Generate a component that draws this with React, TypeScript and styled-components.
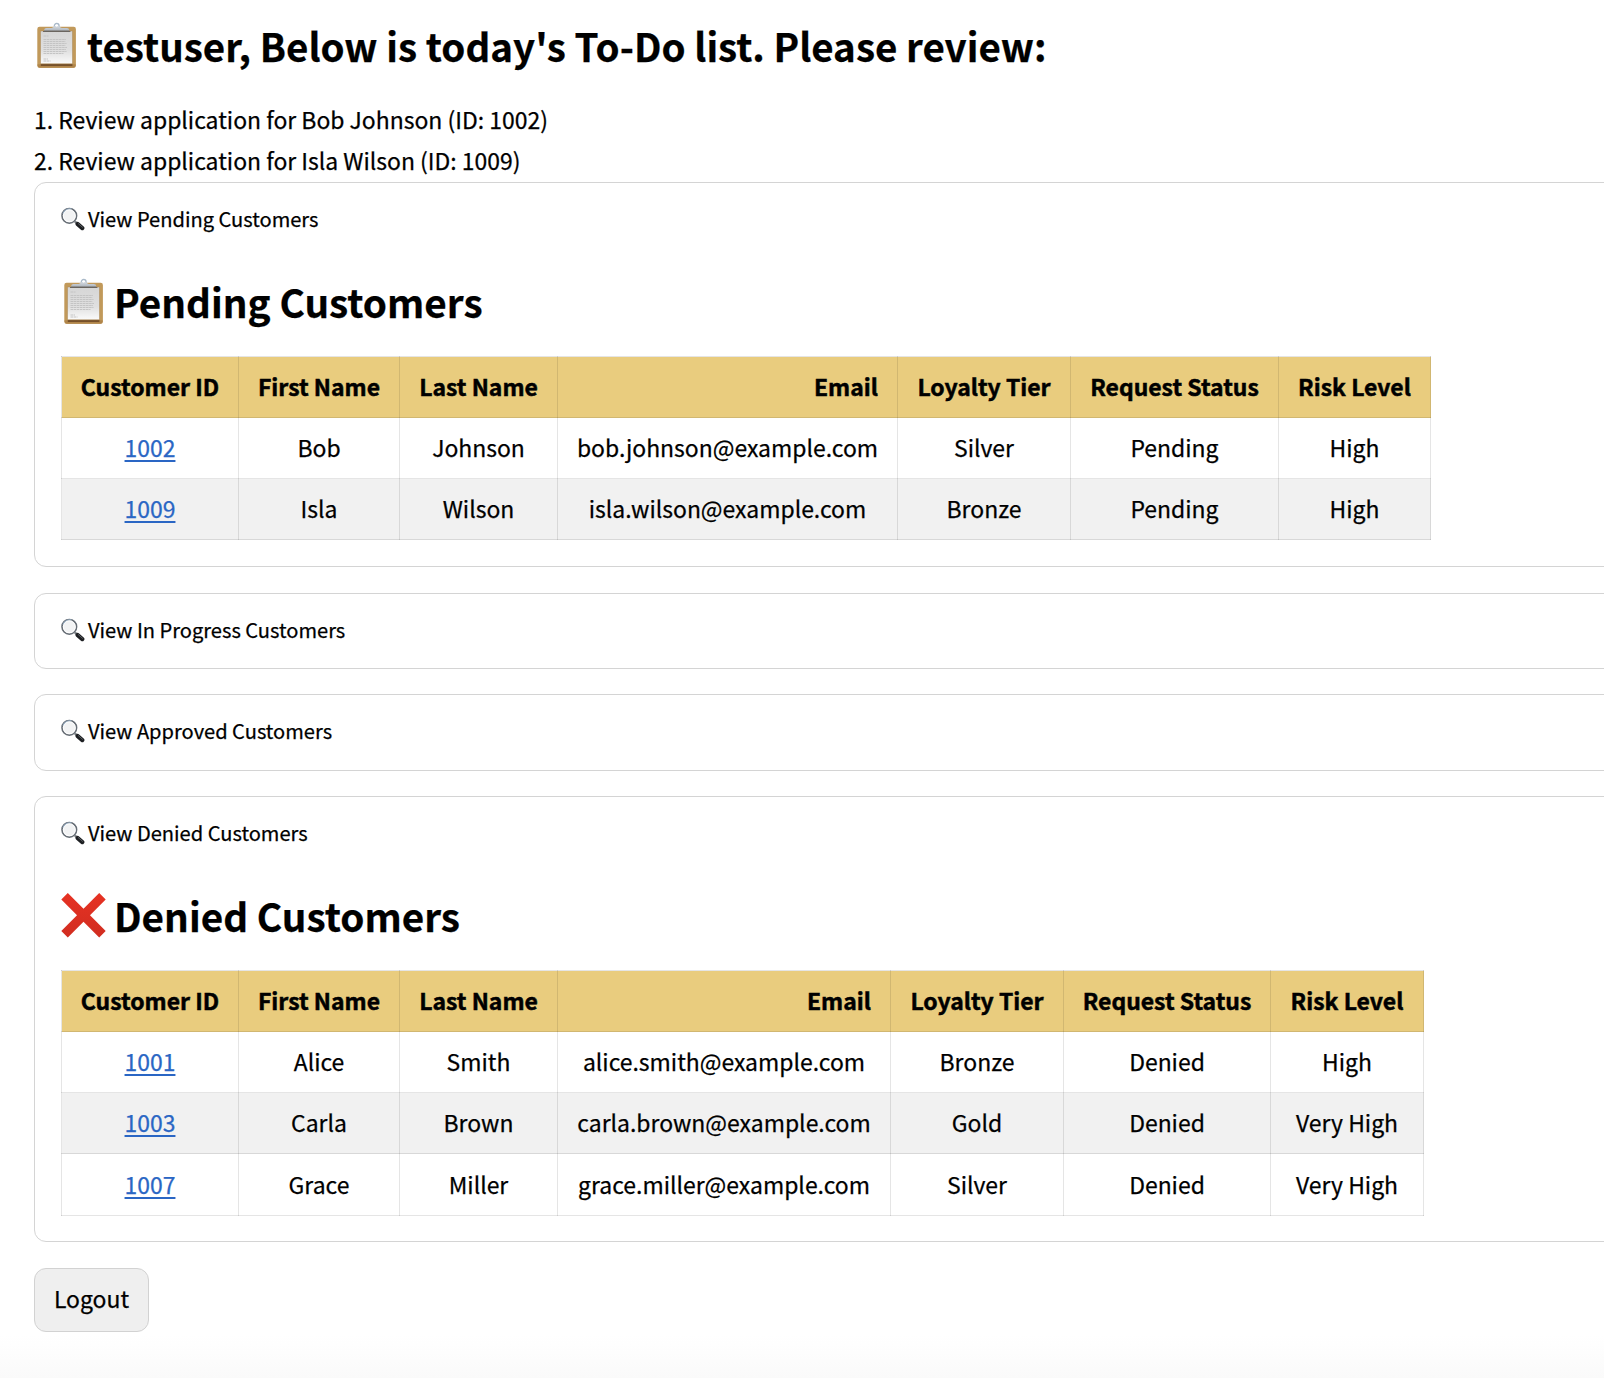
import React from "react";
import styled, { createGlobalStyle } from "styled-components";

const GlobalStyle = createGlobalStyle`
  *, *::before, *::after { box-sizing: border-box; }
  html, body { margin: 0; background: #fff; }
  body {
    overflow: hidden;
    color: #000;
    font-family: "Noto Sans CJK SC", "Noto Sans", sans-serif;
    font-size: 22.94px;
    line-height: 41px;
    -webkit-text-stroke: 0.25px currentColor;
  }
`;

const Page = styled.main`
  height: 1378px;
  padding: 22px 0 0 34px;
  overflow: hidden;
  background: linear-gradient(#fff 0, #fff 1335px, #fafafa 1378px);
`;

const Heading = styled.h2<{ $size?: number }>`
  display: flex;
  align-items: flex-start;
  gap: 8px;
  margin: 0;
  font-size: ${p => p.$size ?? 38.52}px;
  font-weight: 700;
  line-height: 46px;
  white-space: nowrap;
`;

const HeadingIcon = styled.svg`
  flex: none;
  width: 45px;
  height: 46px;
`;

const TodoList = styled.ol`
  margin: 31px 0 1px;
  padding: 0;
  list-style: none;
`;

const TodoItem = styled.li`
  height: 41px;
`;

const Panels = styled.div`
  display: flex;
  flex-direction: column;
  gap: 25.5px;
  width: 1620px;
`;

const Panel = styled.section<{ $open?: boolean }>`
  height: ${p => (p.$open ? "auto" : "76.25px")};
  padding: 24px 26px ${p => (p.$open ? "26px" : "0")};
  border: 1px solid #d4d4d4;
  border-radius: 12px;

  &:last-child { padding-bottom: 25px; }
`;

const Summary = styled.div`
  display: flex;
  gap: 3px;
  font-size: 20.08px;
  line-height: 24px;
`;

const SummaryIcon = styled.svg`
  flex: none;
  width: 24px;
  height: 24px;
`;

const PanelBody = styled.div`
  padding-top: 47px;
`;

const Table = styled.table<{ $w: number }>`
  width: ${p => p.$w}px;
  margin-top: 32px;
  border-collapse: collapse;
  table-layout: fixed;
`;

const Col = styled.col<{ $w: number }>`
  width: ${p => p.$w}px;
`;

const Row = styled.tr`
  height: 61px;

  tbody &:nth-child(2) { background: #f1f1f1; }
  tbody &:nth-child(3) { height: 62px; }
`;

const HeadCell = styled.th<{ $right?: boolean }>`
  padding: 0 ${p => (p.$right ? 19 : 0)}px 2px;
  border: 1px solid rgba(0, 0, 0, 0.1);
  background: #e9cc7e;
  font-weight: 700;
  line-height: 36px;
  text-align: ${p => (p.$right ? "right" : "center")};
  white-space: nowrap;
  -webkit-text-stroke: 0.5px currentColor;
`;

const Cell = styled.td`
  padding: 0 0 2px;
  border: 1px solid rgba(0, 0, 0, 0.1);
  line-height: 36px;
  text-align: center;
`;

const IdLink = styled.a`
  color: #2a66c4;
  text-decoration: underline;
  text-decoration-thickness: 2px;
  text-underline-offset: 3px;
`;

const LogoutButton = styled.button`
  display: block;
  width: 115px;
  height: 64px;
  margin-top: 26px;
  padding: 0 0 3px;
  border: 1px solid #d2d2d2;
  border-radius: 12px;
  background: #efefef;
  color: #000;
  font: inherit;
`;

function Clipboard() {
  return (
    <HeadingIcon viewBox="0 0 45 46">
      <defs>
        <linearGradient id="paper" x1="0" y1="0" x2="0" y2="1">
          <stop offset="0" stopColor="#d6d6d6" />
          <stop offset="0.6" stopColor="#e0e0e0" />
          <stop offset="1" stopColor="#fbfbfb" />
        </linearGradient>
        <linearGradient id="metal" x1="0" y1="0" x2="0" y2="1">
          <stop offset="0" stopColor="#d5dbe2" />
          <stop offset="0.7" stopColor="#b5bcc4" />
          <stop offset="1" stopColor="#6c6660" />
        </linearGradient>
      </defs>
      <rect x="3.3" y="4.8" width="38.6" height="41" rx="2.2" fill="#c1995a" />
      <path d="M3.6 42.2h38v1.3a2.2 2.2 0 0 1-2.2 2.2H5.8a2.2 2.2 0 0 1-2.2-2.2z" fill="#b0854a" />
      <path d="M6.8 41.5h31.6v2.4H6.8z" fill="#76502a" />
      <path d="M6.5 9h32v32.8h-32z" fill="url(#paper)" stroke="#a98755" strokeWidth="0.5" />
      <path d="M9.5 14h5M9.5 17.5h22.5M9.5 19.5h22M9.5 21.5h23M9.5 23.5h22M9.5 25.5h23.5M9.5 27.5h22.5M9.5 29.5h23M9.5 31.5h20M9.5 37h4.5M9.5 39h7" stroke="#c4c4c4" strokeWidth="1" strokeDasharray="2.6 0.5" fill="none" />
      <circle cx="22.7" cy="3.9" r="2.4" fill="#fff" stroke="#a9b9c9" strokeWidth="1.3" />
      <path d="M10 9.300c0-2.300.8-3.400 2.600-3.400h4.900c1.900 0 2.500-1.900 3.700-1.900h3c1.200 0 1.800 1.900 3.700 1.900h4.900c1.800 0 2.600 1.100 2.600 3.400z" fill="url(#metal)" />
      <circle cx="22.7" cy="3.6" r="1.1" fill="#fff" />
      <path d="M9 9.500h27.400" stroke="#625c58" strokeWidth="0.9" />
    </HeadingIcon>
  );
}

function Cross() {
  return (
    <HeadingIcon viewBox="0 0 45 46">
      <defs>
        <linearGradient id="red" x1="0" y1="0" x2="0" y2="1">
          <stop offset="0" stopColor="#e63223" />
          <stop offset="1" stopColor="#d12d20" />
        </linearGradient>
      </defs>
      <path d="M6.800 1 22.500 16.700 38.200 1l6.500 6.500L29 23.200l15.700 15.700-6.500 6.500-15.700-15.700L6.800 45.400.300 38.900 16 23.200.300 7.500z" fill="url(#red)" />
    </HeadingIcon>
  );
}

function Magnifier() {
  return (
    <SummaryIcon viewBox="0 0 24 24">
      <path d="m14 14.600 2.800 2.800" stroke="#6f7479" strokeWidth="2.200" />
      <path d="m16.700 17.100 4.600 4" stroke="#1d1f22" strokeWidth="4.200" strokeLinecap="round" />
      <path d="m17.300 16.600 4.200 3.700" stroke="#5f6469" strokeWidth="0.900" strokeLinecap="round" />
      <circle cx="8.300" cy="8.800" r="7.300" fill="#f2f3f4" stroke="#666d75" strokeWidth="1.600" />
      <path d="M2 6.700a7.300 7.300 0 0 1 8.400-4.800" fill="none" stroke="#93a9bf" strokeWidth="1.200" />
      <circle cx="8.300" cy="8.800" r="6" fill="none" stroke="#fff" strokeWidth="0.900" />
    </SummaryIcon>
  );
}

const columns = ["Customer ID", "First Name", "Last Name", "Email", "Loyalty Tier", "Request Status", "Risk Level"];

const pending = {
  widths: [177, 161, 158, 340, 173, 208, 152],
  rows: [
    ["1002", "Bob", "Johnson", "bob.johnson@example.com", "Silver", "Pending", "High"],
    ["1009", "Isla", "Wilson", "isla.wilson@example.com", "Bronze", "Pending", "High"],
  ],
};

const denied = {
  widths: [177, 161, 158, 333, 173, 207, 153],
  rows: [
    ["1001", "Alice", "Smith", "alice.smith@example.com", "Bronze", "Denied", "High"],
    ["1003", "Carla", "Brown", "carla.brown@example.com", "Gold", "Denied", "Very High"],
    ["1007", "Grace", "Miller", "grace.miller@example.com", "Silver", "Denied", "Very High"],
  ],
};

function CustomerTable({ widths, rows }: { widths: number[]; rows: string[][] }) {
  return (
    <Table $w={widths.reduce((a, b) => a + b, 1)}>
      <colgroup>
        {widths.map((w, i) => <Col key={i} $w={w} />)}
      </colgroup>
      <thead>
        <Row>
          {columns.map(c => <HeadCell key={c} $right={c === "Email"}>{c}</HeadCell>)}
        </Row>
      </thead>
      <tbody>
        {rows.map(r => (
          <Row key={r[0]}>
            {r.map((v, i) => <Cell key={i}>{i === 0 ? <IdLink href="#">{v}</IdLink> : v}</Cell>)}
          </Row>
        ))}
      </tbody>
    </Table>
  );
}

function PanelSummary({ label }: { label: string }) {
  return <Summary><Magnifier /><span>{label}</span></Summary>;
}

export default function App() {
  return (
    <>
      <GlobalStyle />
      <Page>
        <Heading><Clipboard /><span>testuser, Below is today's To-Do list. Please review:</span></Heading>
        <TodoList>
          <TodoItem>1. Review application for Bob Johnson (ID: 1002)</TodoItem>
          <TodoItem>2. Review application for Isla Wilson (ID: 1009)</TodoItem>
        </TodoList>
        <Panels>
          <Panel $open>
            <PanelSummary label="View Pending Customers" />
            <PanelBody>
              <Heading $size={38.7}><Clipboard /><span>Pending Customers</span></Heading>
              <CustomerTable {...pending} />
            </PanelBody>
          </Panel>
          <Panel><PanelSummary label="View In Progress Customers" /></Panel>
          <Panel><PanelSummary label="View Approved Customers" /></Panel>
          <Panel $open>
            <PanelSummary label="View Denied Customers" />
            <PanelBody>
              <Heading $size={38.7}><Cross /><span>Denied Customers</span></Heading>
              <CustomerTable {...denied} />
            </PanelBody>
          </Panel>
        </Panels>
        <LogoutButton>Logout</LogoutButton>
      </Page>
    </>
  );
}
